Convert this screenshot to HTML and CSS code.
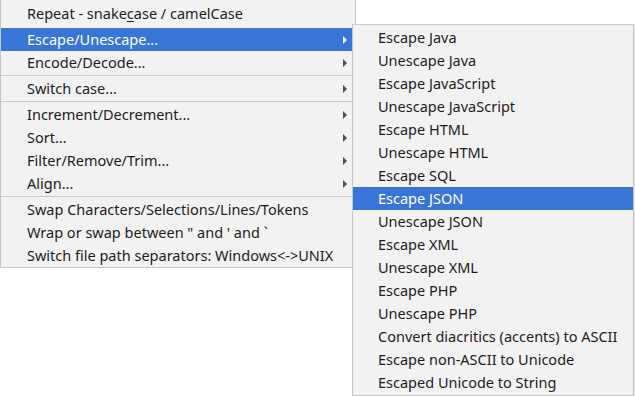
FILE: index.html
```html
<!DOCTYPE html>
<html lang="en">
<head>
    <meta charset="UTF-8">
    <title>String Manipulation</title>
    <link rel="stylesheet" href="styles.css">
</head>
<body>
<div class="menus">
    <ul class="menu main">
        <li class="item"><span>Repeat - snake<u>c</u>ase / camelCase</span></li>
        <li class="gap"></li>
        <li class="item sub active"><span>Escape/Unescape...</span><span class="arrow"></span></li>
        <li class="item sub"><span>Encode/Decode...</span><span class="arrow"></span></li>
        <li class="sep"></li>
        <li class="item sub"><span>Switch case...</span><span class="arrow"></span></li>
        <li class="sep"></li>
        <li class="item sub"><span>Increment/Decrement...</span><span class="arrow"></span></li>
        <li class="item sub"><span>Sort...</span><span class="arrow"></span></li>
        <li class="item sub"><span>Filter/Remove/Trim...</span><span class="arrow"></span></li>
        <li class="item sub"><span>Align...</span><span class="arrow"></span></li>
        <li class="sep"></li>
        <li class="item"><span>Swap Characters/Selections/Lines/Tokens</span></li>
        <li class="item"><span>Wrap or swap between " and ' and `</span></li>
        <li class="item"><span>Switch file path separators: Windows&lt;-&gt;UNIX</span></li>
    </ul>
    <ul class="menu popup">
        <li class="item">Escape Java</li>
        <li class="item">Unescape Java</li>
        <li class="item">Escape JavaScript</li>
        <li class="item">Unescape JavaScript</li>
        <li class="item">Escape HTML</li>
        <li class="item">Unescape HTML</li>
        <li class="item">Escape SQL</li>
        <li class="item active">Escape JSON</li>
        <li class="item">Unescape JSON</li>
        <li class="item">Escape XML</li>
        <li class="item">Unescape XML</li>
        <li class="item">Escape PHP</li>
        <li class="item">Unescape PHP</li>
        <li class="item">Convert diacritics (accents) to ASCII</li>
        <li class="item">Escape non-ASCII to Unicode</li>
        <li class="item">Escaped Unicode to String</li>
    </ul>
</div>
</body>
</html>
```

FILE: styles.css
```css
* {
    margin: 0;
    padding: 0;
    box-sizing: border-box;
}

html, body {
    width: 100%;
    height: 100%;
    overflow: hidden;
    background: #fff;
}

body {
    font-family: "Noto Sans", "Open Sans", sans-serif;
    font-size: 14.5px;
    color: #1c1c1c;
}

.menus {
    position: relative;
}

.menu {
    list-style-type: none;
    background: #f2f2f2;
    border: 1px solid #c6c6c6;
}

.main {
    width: 356px;
    border-top: none;
    padding-top: 2px;
}

.popup {
    position: absolute;
    left: 352px;
    top: 24px;
    width: 282px;
    padding: 1px 0;
    box-shadow: 1px 1px 2px rgba(0, 0, 0, 0.12);
}

.item {
    display: flex;
    justify-content: space-between;
    align-items: center;
    height: 23px;
    line-height: 23px;
    white-space: nowrap;
}

.main .item {
    padding: 0 8px 0 26px;
}

.popup .item {
    padding-left: 25px;
}

.item u {
    text-underline-offset: 2px;
}

.active {
    background: #3875d7;
    color: #fff;
}

.arrow {
    width: 0;
    height: 0;
    border-top: 4px solid transparent;
    border-bottom: 4px solid transparent;
    border-left: 4px solid #4c4c4c;
}

.active .arrow {
    border-left-color: #fff;
}

.gap {
    height: 3px;
}

.sep {
    height: 2px;
    margin-top: 1px;
    border-top: 1px solid #cbcbcb;
}
```
